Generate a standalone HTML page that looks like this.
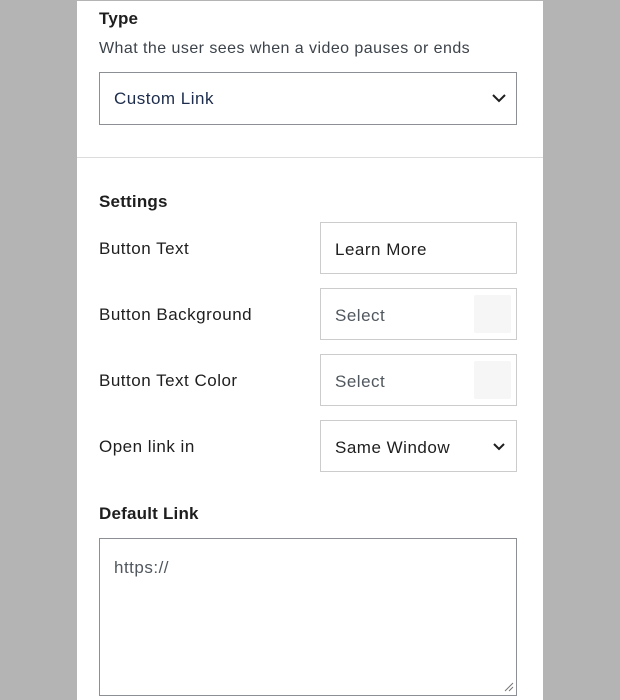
<!DOCTYPE html><html><head><style>
body{margin:0;width:620px;height:700px;background:#b4b4b4;font-family:"Liberation Sans",sans-serif;position:relative;overflow:hidden}
.p{position:absolute;left:77px;top:1px;width:466px;height:699px;background:#fff}
.a{position:absolute}
.t{font-size:17px;color:#1e1e1e;letter-spacing:0.5px}
.b{font-weight:bold;letter-spacing:0.2px}
.box{position:absolute;border:1px solid #ccc;box-sizing:border-box;background:#fff}
</style></head><body>
<div class="p"></div>
<div class="a t b" style="left:99px;top:9px">Type</div>
<div class="a" style="left:99px;top:40px;font-size:16px;color:#3c434a;letter-spacing:0.45px">What the user sees when a video pauses or ends</div>
<div class="box" style="left:99px;top:72px;width:418px;height:53px;border-color:#8c8f94"></div>
<div class="a t" style="left:114px;top:89px;color:#1d2c4c">Custom Link</div>
<svg class="a" style="left:491px;top:92px" width="16" height="12"><path d="M2 3l6 6 6-6" fill="none" stroke="#1e1e1e" stroke-width="2"/></svg>
<div class="a" style="left:77px;top:157px;width:466px;height:1px;background:#dcdcde"></div>
<div class="a t b" style="left:99px;top:192px">Settings</div>
<div class="a t" style="left:99px;top:239px">Button Text</div>
<div class="a t" style="left:99px;top:305px">Button Background</div>
<div class="a t" style="left:99px;top:371px">Button Text Color</div>
<div class="a t" style="left:99px;top:437px">Open link in</div>
<div class="box" style="left:320px;top:222px;width:197px;height:52px"></div>
<div class="a t" style="left:335px;top:240px">Learn More</div>
<div class="box" style="left:320px;top:288px;width:197px;height:52px"></div>
<div class="a t" style="left:335px;top:306px;color:#50575e">Select</div>
<div class="a" style="left:474px;top:295px;width:37px;height:38px;background:#f6f6f6;border-radius:2px"></div>
<div class="box" style="left:320px;top:354px;width:197px;height:52px"></div>
<div class="a t" style="left:335px;top:372px;color:#50575e">Select</div>
<div class="a" style="left:474px;top:361px;width:37px;height:38px;background:#f6f6f6;border-radius:2px"></div>
<div class="box" style="left:320px;top:420px;width:197px;height:52px"></div>
<div class="a t" style="left:335px;top:438px">Same Window</div>
<svg class="a" style="left:491px;top:441px" width="16" height="12"><path d="M3 3l5 5 5-5" fill="none" stroke="#1e1e1e" stroke-width="2"/></svg>
<div class="a t b" style="left:99px;top:504px">Default Link</div>
<div class="box" style="left:99px;top:538px;width:418px;height:158px;border-color:#8c8f94"></div>
<div class="a t" style="left:114px;top:558px;color:#50575e">https://</div>
<svg class="a" style="left:504px;top:682px" width="10" height="10"><path d="M1 9L9 1M5 9L9 5" stroke="#777" stroke-width="1"/></svg>
</body></html>
